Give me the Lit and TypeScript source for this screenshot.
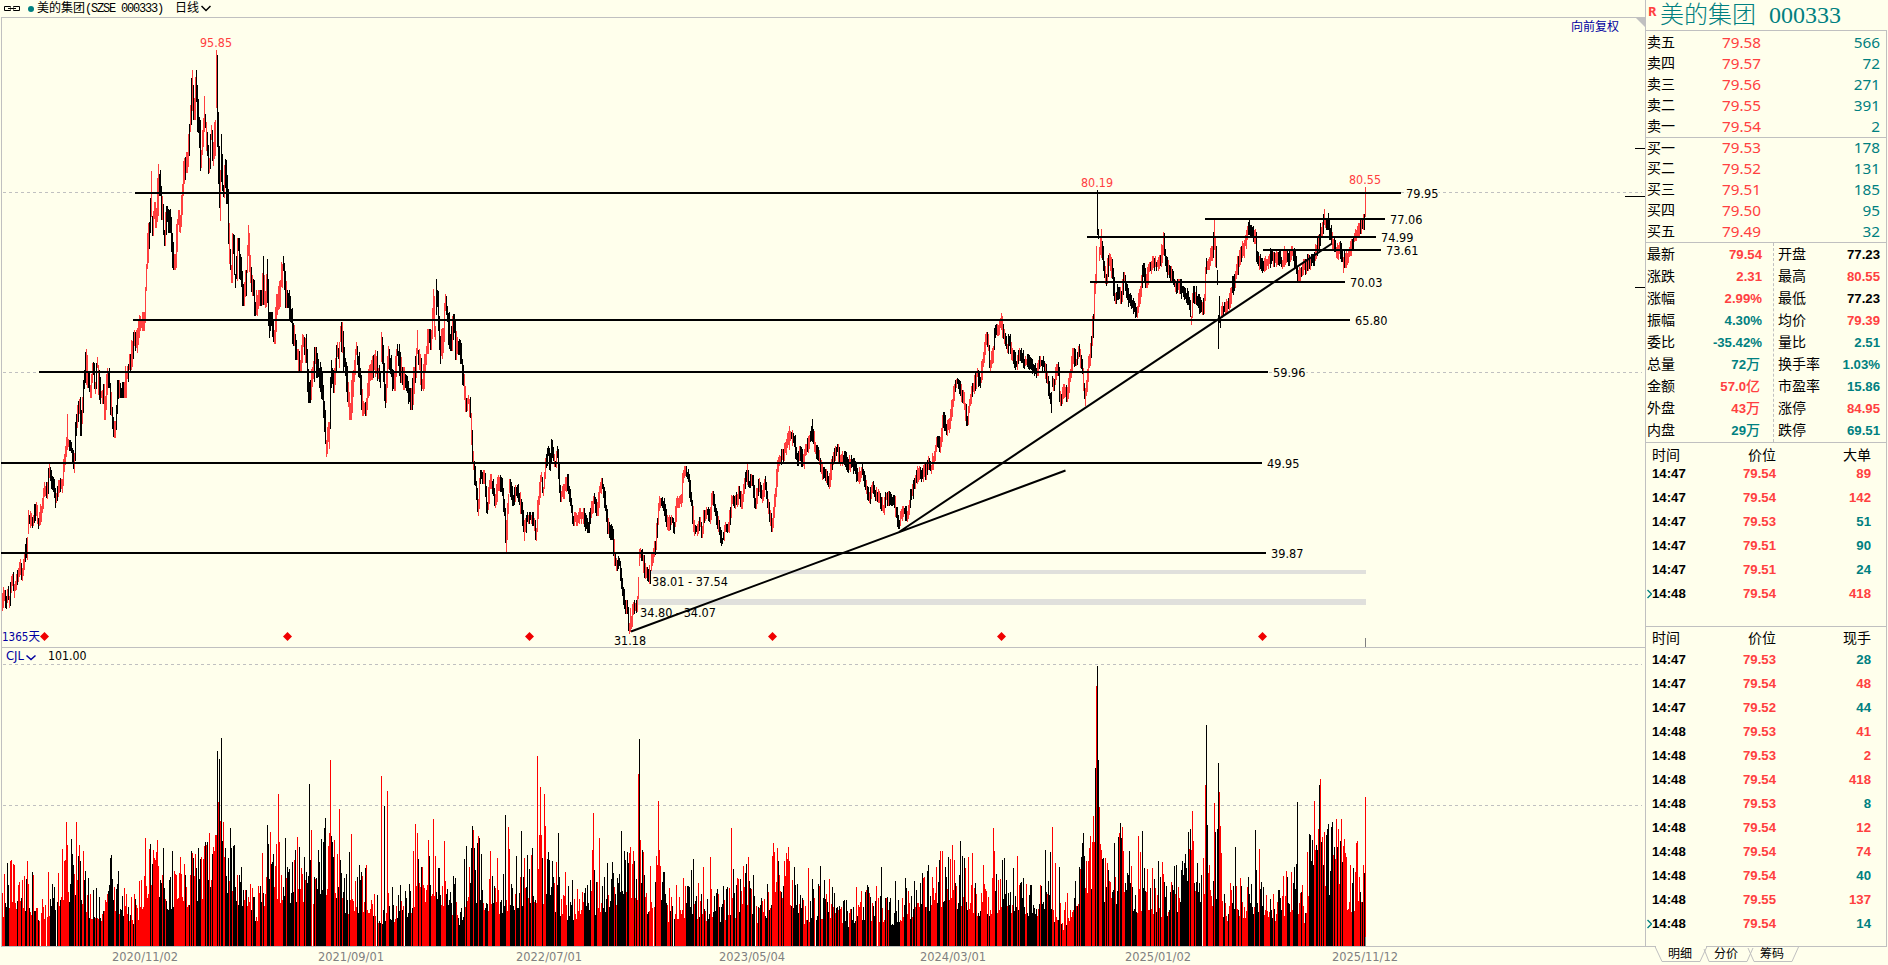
import { LitElement, html, svg, css } from "lit";
import { customElement, property } from "lit/decorators.js";
import { classMap } from "lit/directives/class-map.js";

// turning points of the price curve, as "x,y" pairs in chart pixels
const PIVOTS = `2,603 4,594 6,602 8,594 9,602 11,583 13,580 14,590 18,576 20,566 22,575 25,552 27,545 28,518 30,520
33,520 36,506 38,525 42,506 44,490 47,491 49,472 52,482 54,490 56,501 59,484 62,485 64,462 67,443 69,445 71,448 74,465
76,422 79,405 81,428 84,378 86,360 88,380 90,390 93,368 95,390 97,365 100,396 103,392 105,412 107,376 109,380 113,429
115,430 118,388 121,390 124,390 127,374 130,362 134,338 136,345 140,323 144,320 145,295 146,272 149,230 151,195 152,228
154,210 156,220 158,178 160,188 162,212 164,238 167,214 170,225 173,262 175,262 178,218 180,225 182,192 185,165 187,160
189,132 192,92 194,112 196,84 198,125 201,160 203,126 205,120 207,148 209,168 211,130 213,158 215,128 216,84 217,105
219,190 220,200 221,150 223,190 225,168 227,196 230,262 231,275 233,240 235,280 238,246 241,279 243,298 246,278 248,240
250,275 253,288 255,308 258,298 261,298 263,276 265,300 267,270 269,330 271,320 274,336 277,302 280,288 283,265 286,300
288,298 291,315 294,338 296,352 300,365 303,342 306,355 309,395 312,375 315,355 318,370 322,392 326,446 329,430 331,368
334,385 337,350 340,362 341,330 345,368 350,412 353,378 356,350 359,370 362,408 366,405 370,372 374,358 378,373 381,380
382,345 385,400 388,354 391,370 394,383 397,352 401,375 405,382 409,396 411,402 414,375 417,356 419,362 422,383 425,362
428,337 431,342 433,304 435,336 437,292 440,356 443,336 445,302 447,314 450,343 454,322 456,352 459,345 461,358 463,380
466,406 468,400 470,412 473,464 475,480 478,510 480,476 484,478 487,508 490,480 493,490 495,503 498,480 502,490 504,510
506,538 508,500 509,485 513,500 517,490 521,508 524,528 527,518 531,518 533,520 536,534 538,502 541,478 543,490 546,460
548,452 550,465 551,446 555,464 557,452 560,496 564,490 567,480 570,500 573,520 578,518 583,514 588,527 592,507 594,498
597,510 600,488 602,484 605,505 608,528 612,534 615,560 617,565 619,562 622,590 625,608 627,606 629,628 631,622 633,608
636,606 637,602 638,575 639,556 640,554 642,555 645,573 648,576 650,578 651,560 653,554 655,547 657,524 659,502 662,502
664,510 667,525 672,520 674,528 677,502 681,500 683,476 685,472 688,477 691,500 694,530 697,530 700,523 702,532 704,516
707,512 710,518 712,496 715,510 718,526 722,540 725,528 728,528 732,500 735,504 739,492 742,503 745,478 747,474 749,484
752,480 755,503 759,484 762,498 765,482 768,508 772,526 775,494 778,463 783,455 786,445 789,434 791,435 794,441 797,460
800,452 803,463 805,450 809,440 812,432 815,448 818,455 821,470 825,475 829,483 832,462 837,449 840,460 844,457 848,468
851,461 855,468 858,478 862,470 865,484 869,498 872,487 876,495 879,497 883,509 886,497 890,500 894,502 896,512 899,526
901,515 904,512 907,516 911,495 915,480 919,472 922,476 926,470 928,462 931,468 934,457 937,442 940,448 943,418 946,430
949,424 952,405 954,390 957,380 960,390 963,398 967,420 970,400 973,388 977,374 980,382 983,358 986,338 988,345 990,365
993,352 995,331 998,330 1001,320 1004,338 1007,348 1009,340 1012,355 1016,364 1020,353 1024,363 1028,360 1033,368
1036,372 1040,362 1044,365 1047,378 1050,398 1052,382 1054,385 1056,370 1058,368 1060,400 1064,390 1067,396 1070,375
1073,354 1076,362 1079,350 1082,368 1084,393 1086,386 1089,360 1091,342 1093,320 1095,280 1097,250 1098,235 1099,255
1101,240 1104,272 1106,280 1109,258 1112,273 1115,298 1118,290 1121,298 1124,278 1127,294 1131,303 1134,308 1137,312
1140,292 1143,269 1146,282 1149,268 1153,262 1157,265 1160,261 1163,248 1165,260 1169,272 1172,277 1176,288 1180,285
1184,294 1188,299 1191,316 1193,292 1197,300 1202,309 1204,300 1206,264 1209,263 1212,252 1214,238 1216,262 1217,280
1220,322 1221,312 1224,308 1228,304 1231,292 1235,277 1238,262 1241,252 1244,246 1247,232 1249,228 1252,232 1255,238
1257,258 1260,264 1264,267 1268,262 1271,254 1275,261 1278,255 1282,263 1286,252 1289,260 1292,252 1295,262 1298,276
1302,269 1306,265 1310,260 1313,260 1316,250 1319,240 1322,228 1324,220 1326,224 1328,224 1331,238 1334,246 1337,254
1339,246 1342,256 1345,262 1348,255 1351,245 1354,239 1357,232 1359,228 1362,224 1364,218`;

// long wicks: x, high, low, rising
const WICKS: [number, number, number, boolean][] = [
  [151, 171, 217, true], [158, 164, 216, true], [192, 70, 111, true], [196, 70, 102, false],
  [191, 78, 125, false], [204, 96, 132, true], [216, 50, 108, true], [217, 55, 147, false],
  [220, 170, 221, true], [221, 134, 182, false], [219, 146, 208, false], [200, 120, 171, false],
  [248, 225, 256, true], [225, 159, 188, false], [263, 256, 305, false], [267, 259, 303, false],
  [283, 256, 271, false], [326, 440, 457, true], [340, 326, 342, true], [381, 332, 362, true],
  [433, 289, 320, true], [436, 279, 315, false], [417, 330, 354, true], [67, 414, 450, true],
  [86, 349, 385, true], [506, 520, 552, true], [505, 508, 543, false], [551, 439, 463, false],
  [524, 520, 541, true], [536, 528, 541, true], [630, 608, 632, true], [638, 577, 599, true],
  [649, 565, 584, true], [639, 549, 566, true], [747, 464, 485, true], [812, 419, 442, false],
  [789, 426, 450, true], [1001, 313, 330, true], [1051, 392, 413, false], [1085, 388, 406, true],
  [1097, 190, 235, false], [1101, 229, 258, true], [1163, 232, 255, true], [1164, 233, 256, false],
  [1191, 316, 325, true], [1214, 220, 250, true], [1217, 270, 285, false], [1218, 315, 349, false],
  [1249, 220, 235, false], [1324, 209, 225, true], [1328, 213, 230, false], [1298, 270, 281, true],
  [1343, 257, 273, true], [1365, 187, 217, true],
];

// average volume height along the x axis
const VOLUME_BASE = [
  [2, 46], [12, 66], [28, 58], [40, 34], [58, 50], [64, 76], [82, 68], [90, 46], [102, 42], [110, 68], [120, 50],
  [136, 34], [146, 80], [162, 74], [170, 58], [190, 66], [212, 80], [230, 86], [245, 58], [256, 38], [266, 76],
  [285, 66], [300, 76], [312, 72], [335, 82], [345, 54], [368, 56], [376, 36], [398, 42], [412, 54], [428, 70],
  [440, 54], [450, 58], [460, 34], [468, 68], [478, 74], [486, 48], [506, 58], [525, 68], [548, 72], [560, 46],
  [582, 42], [598, 54], [622, 66], [640, 76], [648, 44], [659, 80], [668, 40], [690, 48], [715, 38], [745, 50],
  [762, 32], [775, 84], [792, 68], [804, 36], [830, 48], [845, 32], [868, 44], [890, 34], [905, 46], [920, 48],
  [940, 68], [965, 62], [978, 48], [1005, 56], [1030, 50], [1044, 52], [1063, 26], [1072, 52], [1088, 92],
  [1102, 78], [1110, 50], [1124, 82], [1132, 54], [1148, 56], [1166, 48], [1190, 70], [1208, 78], [1214, 64],
  [1226, 42], [1254, 50], [1276, 42], [1294, 62], [1304, 40], [1312, 84], [1336, 88], [1348, 60], [1364, 54],
];

// volume spikes "x,top,k|r"
const VOLUME_SPIKES = `7,863,k 10,861,r 13,864,r 24,876,r 27,861,r 66,822,r 76,822,r 67,845,r 79,845,r 80,861,k
83,851,r 48,872,r 111,855,k 145,838,r 149,849,r 163,848,k 172,851,k 192,853,r 200,859,k 215,835,r 216,835,r 217,751,k
218,802,r 219,759,k 220,821,r 221,738,k 223,822,r 225,848,k 230,828,k 231,848,k 234,845,k 262,853,r 267,825,k 268,844,k
270,832,r 278,794,r 279,842,r 285,838,k 295,850,k 299,847,k 309,784,k 311,830,r 321,839,k 324,828,k 325,818,k 329,833,r
330,760,r 334,840,r 339,809,r 340,860,k 351,834,r 349,852,k 381,776,r 384,806,k 387,791,r 413,851,r 415,824,r 417,833,r
428,840,r 433,819,r 435,856,r 444,841,r 464,859,k 466,846,k 471,848,k 472,826,k 473,830,r 474,848,k 477,843,k 478,836,r
479,838,k 490,851,r 497,858,r 505,815,k 508,827,r 509,849,r 521,831,k 524,858,r 537,756,r 539,835,r 540,787,r 541,835,r
544,794,r 545,826,r 547,859,k 556,862,r 558,833,k 565,872,r 572,880,k 592,850,r 593,813,r 594,870,k 599,838,r 607,863,k
613,873,k 621,831,k 624,851,k 625,860,k 628,863,k 630,847,r 633,851,r 638,774,r 639,739,k 640,840,r 644,875,k 650,866,r
656,856,r 657,865,r 658,801,r 659,850,r 676,885,r 683,878,r 691,870,k 693,859,k 698,883,r 703,867,r 710,857,r 731,828,r
733,869,k 738,879,r 743,866,r 746,864,k 748,857,r 753,875,k 773,843,r 777,848,r 778,861,k 786,853,r 788,847,r 792,880,r
797,884,k 808,868,r 812,879,k 820,866,k 832,887,k 856,887,r 881,867,k 895,881,k 928,865,k 940,851,r 942,851,r 948,857,k
952,845,r 960,841,k 964,858,k 968,857,r 972,853,r 983,865,r 993,828,r 994,851,r 1002,860,k 1004,858,k 1017,856,r
1045,850,k 1050,852,k 1052,827,r 1055,863,r 1059,867,k 1081,857,k 1083,833,k 1089,848,r 1092,842,r 1093,816,r
1094,842,r 1095,768,k 1096,686,r 1097,666,k 1098,760,k 1099,807,r 1101,850,r 1105,858,r 1107,863,r 1114,843,k
1118,837,k 1119,833,r 1120,823,k 1122,827,r 1123,851,r 1131,866,r 1138,836,r 1140,852,r 1142,831,k 1158,861,k
1162,862,r 1182,861,k 1184,863,k 1188,832,k 1189,849,r 1190,829,k 1192,811,r 1193,841,r 1197,863,k 1203,858,r
1205,785,r 1206,725,k 1207,825,k 1214,803,r 1215,832,k 1217,829,k 1218,763,k 1219,792,r 1220,826,r 1221,853,r
1235,847,k 1255,830,k 1256,870,k 1259,849,r 1291,872,r 1297,802,k 1307,852,r 1309,834,k 1310,835,k 1314,801,r
1315,850,r 1316,845,k 1318,829,r 1319,785,k 1320,779,r 1321,842,k 1324,832,r 1328,824,k 1331,827,k 1332,822,k
1334,847,k 1335,859,r 1337,847,k 1340,841,k 1341,819,r 1343,846,r 1344,839,r 1350,865,r 1356,843,r 1357,841,r
1363,865,r 1365,797,r`;

const VOLUME_GAPS = new Set([40, 46, 56, 312, 376, 404, 653, 673, 755, 815, 877, 1202]);

// support and resistance lines: x1, x2, y, label
const LEVELS: [number, number, number, string][] = [
  [135, 1401, 193, "79.95"],
  [1205, 1385, 219, "77.06"],
  [1087, 1376, 237, "74.99"],
  [1263, 1381, 250, "73.61"],
  [1090, 1345, 282, "70.03"],
  [133, 1350, 320, "65.80"],
  [39, 1268, 372, "59.96"],
  [1, 1262, 463, "49.95"],
  [1, 1266, 553, "39.87"],
];

const DATES: [number, string][] = [
  [112, "2020/11/02"],
  [318, "2021/09/01"],
  [516, "2022/07/01"],
  [719, "2023/05/04"],
  [920, "2024/03/01"],
  [1125, "2025/01/02"],
  [1332, "2025/11/12"],
];

const DIAMONDS = [44.5, 287.5, 529.5, 772.5, 1001.5, 1262.5];

function createRandom(seed: number) {
  let s = seed;
  return () => {
    s = (s * 16807) % 2147483647;
    return s / 2147483647;
  };
}

function segmentAt(points: number[][], x: number) {
  let i = 0;
  while (i < points.length - 2 && points[i + 1][0] < x) i++;
  return [points[i], points[i + 1]];
}

function interpolate(points: number[][], x: number) {
  const [[x0, y0], [x1, y1]] = segmentAt(points, x);
  return y0 + ((y1 - y0) * (x - x0)) / (x1 - x0);
}

function bar(x: number, top: number, bottom: number) {
  return `M${x} ${Math.round(top)}h1V${Math.round(bottom)}h-1z`;
}

function buildChart() {
  const random = createRandom(333);
  const pivots = PIVOTS.split(/\s+/).map((p) => p.split(",").map(Number));
  const spikes = new Map(VOLUME_SPIKES.split(/\s+/).map((p) => {
    const [x, top, color] = p.split(",");
    return [Number(x), { top: Number(top), up: color === "r" }] as const;
  }));
  const wicks = new Map(WICKS.map((w) => [w[0], w] as const));
  const out = { up: "", down: "", volumeUp: "", volumeDown: "" };

  for (let x = 2; x <= 1365; x++) {
    const y = interpolate(pivots, x);
    const slope = interpolate(pivots, x + 1) - interpolate(pivots, x - 1);
    let up = random() < (slope < 0 ? 0.76 : 0.22);
    const swing = x < 80 ? 7 : x < 460 ? 15 : x < 640 ? 8 : x < 1080 ? 7 : 8.5;
    const reach = 2 + Math.abs(slope) * 0.3;
    const [[, y0], [, y1]] = segmentAt(pivots, x);
    const margin = x < 460 ? 8 : 6;
    // keep bars inside the current swing
    let top = Math.max(y - reach - random() * swing, Math.min(y0, y1) - margin);
    let bottom = Math.min(y + reach + random() * swing, Math.max(y0, y1) + margin);
    const wick = wicks.get(x);
    if (wick) [, top, bottom, up] = wick;
    if (up) out.up += bar(x, top, bottom);
    else out.down += bar(x, top, bottom);

    if (VOLUME_GAPS.has(x)) continue;
    const spike = spikes.get(x);
    const base = interpolate(VOLUME_BASE, x);
    const volumeTop = spike ? spike.top : 946 - base * (0.58 + Math.pow(random(), 1.4) * 0.9);
    if (spike ? spike.up : up) out.volumeUp += bar(x, volumeTop, 946);
    else out.volumeDown += bar(x, volumeTop, 946);
  }
  return out;
}

const chart = buildChart();

const label = (x: number, y: number, text: string, width: number, cls = "") =>
  svg`<text class=${"label " + cls} x=${x} y=${y} textLength=${width} lengthAdjust="spacingAndGlyphs">${text}</text>`;

const grid = (y: number) => svg`<path class="grid" d=${`M3 ${y}.5H1642`} />`;

const chartStyles = css`
  :host {
    display: block;
  }

  svg {
    display: block;
  }

  .bars {
    shape-rendering: crispEdges;
  }

  .up {
    fill: #ff4040;
  }

  .down {
    fill: #000;
  }

  .volume-up {
    fill: #f00;
  }

  .frame {
    stroke: #c0c0c0;
    fill: none;
    shape-rendering: crispEdges;
  }

  .grid {
    stroke: #c0c0c0;
    stroke-dasharray: 3 3;
    shape-rendering: crispEdges;
  }

  .level {
    stroke: #000;
    stroke-width: 2;
    shape-rendering: crispEdges;
  }

  .trend {
    stroke: #000;
    stroke-width: 2;
  }

  .gap {
    fill: #e0e0dc;
  }

  .diamond {
    fill: #f00000;
  }

  .tick {
    stroke: #000;
    shape-rendering: crispEdges;
  }

  .cursor {
    stroke: #808080;
    shape-rendering: crispEdges;
  }

  .corner {
    fill: #c0c0c0;
  }

  .arrow {
    stroke: #0000a0;
    stroke-width: 1.5;
    fill: none;
  }

  .label {
    font: 12px "DejaVu Sans Condensed", "DejaVu Sans", "Noto Sans CJK SC", sans-serif;
    fill: #000;
  }

  .label.red {
    fill: #ff4040;
  }

  .label.blue {
    fill: #0000a0;
  }

  .label.gray {
    fill: #808080;
  }

  .label.plate {
    paint-order: stroke;
    stroke: #ffffec;
    stroke-width: 3px;
  }
`;

@customElement("price-chart")
export class PriceChart extends LitElement {
  static styles = chartStyles;

  render() {
    return html`
      <svg width="1645" height="630" viewBox="0 17 1645 630">
        <path class="frame" d="M1 17.5H1645M1.5 17V647" />
        <path class="corner" d="M1636 18h9v9z" />
        ${grid(192)} ${grid(372)}
        <rect class="gap" x="650" y="570" width="716" height="4" />
        <rect class="gap" x="638" y="599" width="728" height="6" />
        <g class="bars">
          <path class="up" d=${chart.up} />
          <path class="down" d=${chart.down} />
        </g>
        ${label(652, 586, "38.01 - 37.54", 76)}
        ${label(640, 617, "34.80 - 34.07", 76)}
        ${LEVELS.map(([x1, x2, y, text]) => svg`
          <path class="level" d=${`M${x1} ${y}H${x2}`} />
          ${label(x2 + 5, y + 5, text, 32.5, "plate")}
        `)}
        <path class="trend" d="M631 631.5L1065.5 470.5M899 532L1332 243.5" />
        ${label(200, 47, "95.85", 32, "red")}
        ${label(1081, 187, "80.19", 32, "red")}
        ${label(1349, 184, "80.55", 32, "red")}
        ${label(614, 645, "31.18", 32)}
        ${label(2, 641, "1365天", 38, "blue")}
        ${label(1571, 31, "向前复权", 48, "blue")}
        ${DIAMONDS.map((x) => svg`<path class="diamond" d=${`M${x} 632l4.5 4.5-4.5 4.5-4.5-4.5z`} />`)}
        <path class="cursor" d="M1365.5 638V647" />
        <path class="tick" d="M1635 148.5H1645M1625 196.5H1645M1635 287.5H1645" />
      </svg>
    `;
  }
}

@customElement("volume-chart")
export class VolumeChart extends LitElement {
  static styles = chartStyles;

  render() {
    return html`
      <svg width="1645" height="318" viewBox="0 647 1645 318">
        <path class="frame" d="M1 647.5H1645M1.5 647V947M1 946.5H1645" />
        ${grid(664)} ${grid(805)}
        ${label(6, 660, "CJL", 18, "blue")}
        <path class="arrow" d="M26.5 655.5l4.5 4 4.5-4" />
        ${label(48, 660, "101.00", 38.5)}
        <g class="bars">
          <path class="volume-up" d=${chart.volumeUp} />
          <path class="down" d=${chart.volumeDown} />
        </g>
        <path class="cursor" d="M1365.5 937V946" />
        ${DATES.map(([x, text]) => label(x, 961, text, 66, "gray"))}
      </svg>
    `;
  }
}

const BOOK: [string, string, string][] = [
  ["卖五", "79.58", "566"],
  ["卖四", "79.57", "72"],
  ["卖三", "79.56", "271"],
  ["卖二", "79.55", "391"],
  ["卖一", "79.54", "2"],
  ["买一", "79.53", "178"],
  ["买二", "79.52", "131"],
  ["买三", "79.51", "185"],
  ["买四", "79.50", "95"],
  ["买五", "79.49", "32"],
];

// label, value, color on the left; the same on the right
const STATS = [
  ["最新", "79.54", "red", "开盘", "77.23", "black"],
  ["涨跌", "2.31", "red", "最高", "80.55", "red"],
  ["涨幅", "2.99%", "red", "最低", "77.23", "black"],
  ["振幅", "4.30%", "teal", "均价", "79.39", "red"],
  ["委比", "-35.42%", "teal", "量比", "2.51", "teal"],
  ["总量", "72万", "teal", "换手率", "1.03%", "teal"],
  ["金额", "57.0亿", "red", "市盈率", "15.86", "teal"],
  ["外盘", "43万", "red", "涨停", "84.95", "red"],
  ["内盘", "29万", "teal", "跌停", "69.51", "teal"],
];

const BIG_TRADES = [
  ["14:47", "79.54", "89", "red"],
  ["14:47", "79.54", "142", "red"],
  ["14:47", "79.53", "51", "teal"],
  ["14:47", "79.51", "90", "teal"],
  ["14:47", "79.51", "24", "teal"],
  ["14:48", "79.54", "418", "red"],
];

const TRADES = [
  ["14:47", "79.53", "28", "teal"],
  ["14:47", "79.54", "48", "red"],
  ["14:47", "79.52", "44", "teal"],
  ["14:48", "79.53", "41", "red"],
  ["14:48", "79.53", "2", "red"],
  ["14:48", "79.54", "418", "red"],
  ["14:48", "79.53", "8", "teal"],
  ["14:48", "79.54", "12", "red"],
  ["14:48", "79.54", "74", "red"],
  ["14:48", "79.54", "40", "teal"],
  ["14:48", "79.55", "137", "red"],
  ["14:48", "79.54", "14", "teal"],
];

@customElement("trade-list")
export class TradeList extends LitElement {
  @property({ type: String }) public heading: string = "";
  @property({ attribute: false }) public rows: string[][] = [];

  static styles = css`
    :host {
      display: block;
    }

    .row {
      display: grid;
      grid-template-columns: 5px 76px 48px 1fr;
      align-items: center;
      height: 24px;
      padding: 0 15px 0 1px;
      font: bold 13.2px/24px "Liberation Sans", "Noto Sans CJK SC", sans-serif;
      text-align: right;
    }

    .head {
      height: var(--head-height, 21px);
      padding-top: var(--head-offset, 0px);
      padding-bottom: 2px;
      box-sizing: border-box;
      font: 14px/18px "Noto Sans CJK SC", sans-serif;
    }

    .time {
      text-align: left;
    }

    .marker {
      display: block;
    }

    .red {
      color: #ff4040;
    }

    .teal {
      color: #008080;
    }
  `;

  render() {
    return html`
      <div class="row head">
        <span></span><span class="time">时间</span><span>价位</span><span>${this.heading}</span>
      </div>
      ${this.rows.map(([time, price, count, color], i) => html`
        <div class="row">
          ${i === this.rows.length - 1
            ? html`<svg class="marker" width="5" height="10"><path d="M.5 1l4 4-4 4" fill="none" stroke="#008080" stroke-width="1.4" /></svg>`
            : html`<span></span>`}
          <span class="time">${time}</span>
          <span class="red">${price}</span>
          <span class=${color}>${count}</span>
        </div>
      `)}
    `;
  }
}

@customElement("quote-panel")
export class QuotePanel extends LitElement {
  static styles = css`
    :host {
      display: flex;
      flex-direction: column;
      width: 243px;
      height: 965px;
    }

    .title {
      display: flex;
      box-sizing: border-box;
      height: 30px;
      padding-left: 2px;
      border-left: 1px solid #c0c0c0;
      color: #008080;
      font: 300 24px/30px "Liberation Serif", "Noto Sans CJK SC", serif;
      word-spacing: 7px;
      white-space: pre;
    }

    .flag {
      width: 12px;
      color: #ff4040;
      font: bold 13px/22px "Noto Sans", sans-serif;
    }

    .body {
      box-sizing: border-box;
      width: 242px;
      height: 917px;
      border: 1px solid #c0c0c0;
    }

    .book {
      padding-top: 1px;
    }

    .book-row {
      display: grid;
      grid-template-columns: 40px 74px 1fr;
      box-sizing: border-box;
      height: 21px;
      padding: 0 6px 0 1px;
      font: 15.3px/21px "Noto Sans", sans-serif;
      text-align: right;
    }

    .book-row.split {
      border-top: 1px solid #c0c0c0;
      line-height: 19px;
    }

    .name {
      font: 14px/19px "Noto Sans CJK SC", sans-serif;
      text-align: left;
    }

    .stats {
      display: grid;
      grid-template-columns: 127px 1fr;
      height: 200px;
      box-sizing: border-box;
      border-top: 1px solid #c0c0c0;
    }

    .stats-col {
      padding: 0 11px 0 1px;
    }

    .stats-col.right {
      padding: 0 6px 0 4px;
      border-left: 1px dashed #c0c0c0;
    }

    .stat {
      display: flex;
      justify-content: space-between;
      height: 22px;
      font: bold 13.2px/23px "Liberation Sans", "Noto Sans CJK SC", sans-serif;
    }

    .stat .name {
      line-height: 21px;
    }

    .unit {
      font: 500 14px/20px "Noto Sans CJK SC", sans-serif;
      margin-right: 2px;
    }

    .big {
      --head-height: 19px;
      --head-offset: 2px;
      box-sizing: border-box;
      height: 184px;
      border-top: 1px solid #c0c0c0;
    }

    .all {
      border-top: 1px solid #c0c0c0;
    }

    .tabs {
      display: block;
      position: relative;
      margin-top: -5px;
    }

    .tab-open {
      stroke: #ffffec;
    }

    .tab-line {
      fill: none;
      stroke: #c0c0c0;
    }

    .tab-text {
      font: 12px "Noto Sans CJK SC", sans-serif;
    }

    .red {
      color: #ff4040;
    }

    .teal {
      color: #008080;
    }

    .black {
      color: #000;
    }
  `;

  renderStat(name: string, value: string, color: string) {
    const unit = /[万亿]$/.test(value) ? value.slice(-1) : "";
    const amount = unit ? value.slice(0, -1) : value;
    return html`
      <div class="stat">
        <span class="name">${name}</span>
        <span class=${color}>${amount}${unit ? html`<span class="unit">${unit}</span>` : ""}</span>
      </div>
    `;
  }

  render() {
    return html`
      <div class="title"><span class="flag">R</span><span>美的集团 000333</span></div>
      <div class="body">
        <div class="book">
          ${BOOK.map(([name, price, count], i) => html`
            <div class=${classMap({ "book-row": true, split: i === 5 })}>
              <span class="name">${name}</span><span class="red">${price}</span><span class="teal">${count}</span>
            </div>
          `)}
        </div>
        <div class="stats">
          <div class="stats-col">${STATS.map((s) => this.renderStat(s[0], s[1], s[2]))}</div>
          <div class="stats-col right">${STATS.map((s) => this.renderStat(s[3], s[4], s[5]))}</div>
        </div>
        <trade-list class="big" heading="大单" .rows=${BIG_TRADES}></trade-list>
        <trade-list class="all" heading="现手" .rows=${TRADES}></trade-list>
      </div>
      <svg class="tabs" width="243" height="23" viewBox="1645 942 243 23">
        <path class="tab-open" d="M1656 946.5H1706" />
        <path
          class="tab-line"
          d="M1655 946.5L1662 961.5H1700L1707 946.5M1704 949L1709 961.5H1747L1753 948M1748 948L1754 961.5H1792L1798.5 947"
        />
        <text class="tab-text" x="1668" y="958">明细</text>
        <text class="tab-text" x="1714" y="958">分价</text>
        <text class="tab-text" x="1760" y="958">筹码</text>
      </svg>
    `;
  }
}

@customElement("app-root")
export class AppRoot extends LitElement {
  static styles = css`
    :host {
      display: grid;
      grid-template-columns: 1645px 243px;
      height: 965px;
      overflow: hidden;
      background: #ffffec;
      color: #000;
    }

    .main {
      display: flex;
      flex-direction: column;
    }

    .toolbar {
      display: flex;
      align-items: center;
      height: 17px;
      padding-left: 4px;
      font: 12px/17px "Liberation Serif", "Noto Sans CJK SC", serif;
      white-space: pre;
    }

    .link {
      margin-right: 8px;
    }

    .dot {
      width: 6px;
      height: 6px;
      margin-right: 3px;
      border-radius: 50%;
      background: #008080;
    }

    .symbol {
      width: 138px;
    }

    .code {
      font: 12px/16px "Liberation Mono", monospace;
      letter-spacing: -1.2px;
    }

    .period {
      margin-right: 2px;
    }
  `;

  render() {
    return html`
      <div class="main">
        <div class="toolbar">
          <svg class="link" width="16" height="5">
            <path d="M6.5 1.5V.5H.5v4h6v-1M9.5 1.5V.5h6v4h-6v-1M4 2.5h8" fill="none" stroke="#000" />
          </svg>
          <span class="dot"></span>
          <span class="symbol">美的集团<span class="code">(SZSE 000333)</span></span>
          <span class="period">日线</span>
          <svg width="10" height="7"><path d="M.5 1l4.5 4.5L9.5 1" fill="none" stroke="#000" stroke-width="1.5" /></svg>
        </div>
        <price-chart></price-chart>
        <volume-chart></volume-chart>
      </div>
      <quote-panel></quote-panel>
    `;
  }
}
